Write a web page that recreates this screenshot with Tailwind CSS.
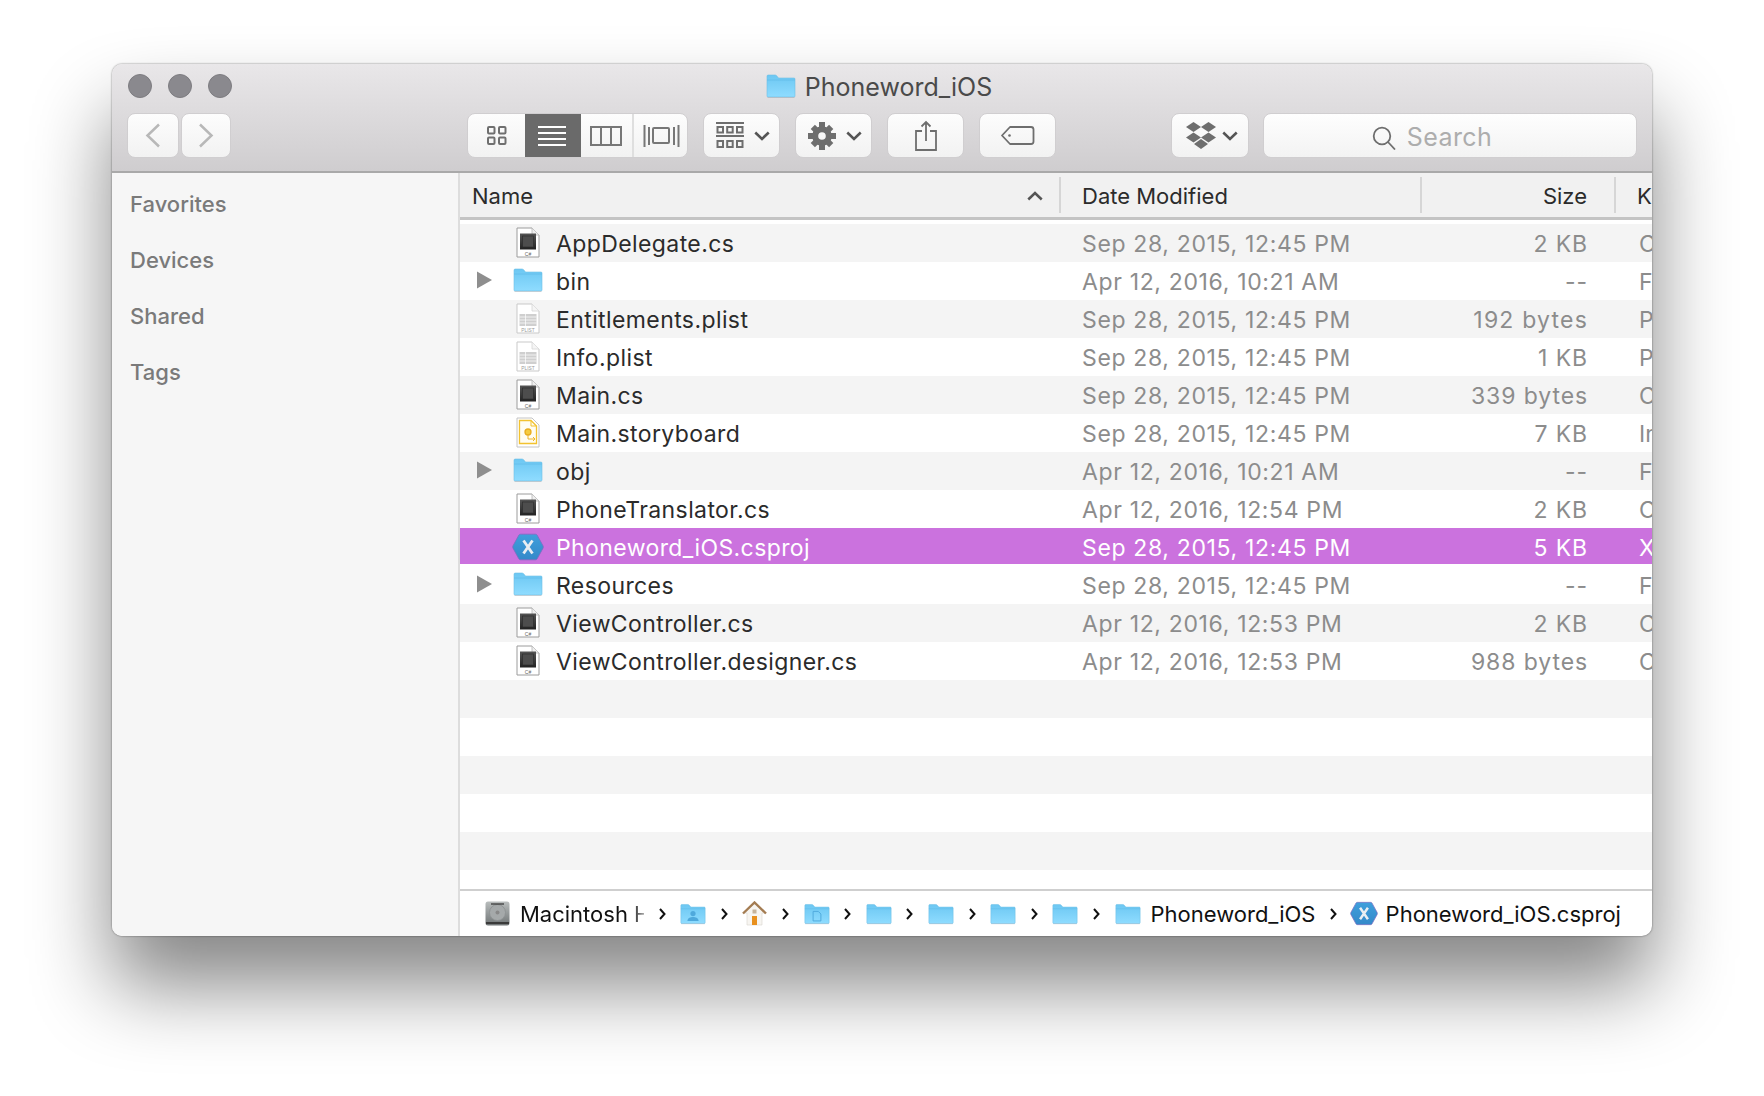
<!DOCTYPE html>
<html lang="en">
<head>
<meta charset="utf-8">
<title>Phoneword_iOS</title>
<script src="https://cdn.jsdelivr.net/npm/@tailwindcss/browser@4"></script>
</head>
<body class="bg-white min-h-screen pl-[112px] pt-[64px] font-['Inter','Liberation_Sans',sans-serif] overflow-hidden">
<svg class="absolute w-0 h-0" aria-hidden="true">
  <defs>
    <linearGradient id="fg" x1="0" y1="0" x2="0" y2="1"><stop offset="0" stop-color="#6cc7f2"/><stop offset="1" stop-color="#8fdcff"/></linearGradient>
    <linearGradient id="sq" x1="0" y1="0" x2="0" y2="1"><stop offset="0" stop-color="#555"/><stop offset="1" stop-color="#222"/></linearGradient>
    <linearGradient id="hx" x1="0" y1="0" x2="0" y2="1"><stop offset="0" stop-color="#3f9fdc"/><stop offset="1" stop-color="#3489c9"/></linearGradient>
    <linearGradient id="dk" x1="0" y1="0" x2="0" y2="1"><stop offset="0" stop-color="#b9bdbd"/><stop offset="1" stop-color="#6f7475"/></linearGradient>
    <symbol id="folder" viewBox="0 0 30 24">
      <path d="M1 22V2.2C1 1.4 1.5 1 2.2 1H9c.7 0 1.2.3 1.7.8L12.5 4H28c.7 0 1 .4 1 1v17c0 .7-.4 1-1 1H2c-.7 0-1-.4-1-1Z" fill="url(#fg)" stroke="#6fbfe6" stroke-width=".6"/>
      <path d="M1 6h28" stroke="#5ab6e4" stroke-width=".8" opacity=".7"/>
      <path d="M1.5 23.5h27" stroke="#9a9a9a" stroke-width=".7" opacity=".5"/>
    </symbol>
    <symbol id="userfolder" viewBox="0 0 30 24">
      <use href="#folder" width="30" height="24"/>
      <circle cx="15" cy="11.5" r="3" fill="#4fa9dc"/>
      <path d="M8.5 20c.5-3.500 3.500-4.500 6.500-4.500s6 1 6.500 4.500Z" fill="#4fa9dc"/>
    </symbol>
    <symbol id="docfolder" viewBox="0 0 30 24">
      <use href="#folder" width="30" height="24"/>
      <path d="M10.500 9h6l3 3v8h-9Z" fill="none" stroke="#4fa9dc" stroke-width="1.100"/>
    </symbol>
    <symbol id="cs" viewBox="0 0 24 31">
      <path d="M1 1h15l7 7v22H1Z" fill="#fff" stroke="#9c9c9c" stroke-width="1"/>
      <path d="M16 1v7h7" fill="#efefef" stroke="#b5b5b5" stroke-width=".8"/>
      <rect x="4" y="6.500" width="16" height="16" fill="url(#sq)"/>
      <rect x="6.500" y="9" width="11" height="11" fill="#4d4d4d" stroke="#2a2a2a" stroke-width=".6"/>
      <text x="12" y="28.500" text-anchor="middle" font-size="5" fill="#666" font-family="Liberation Sans">C#</text>
    </symbol>
    <symbol id="plist" viewBox="0 0 24 31">
      <path d="M1 1h15l7 7v22H1Z" fill="#fff" stroke="#c9c9c9" stroke-width="1"/>
      <path d="M16 1v7h7" fill="#f5f5f5" stroke="#d5d5d5" stroke-width=".8"/>
      <rect x="3.500" y="11" width="17" height="12" fill="#cfcfcf"/>
      <path d="M3.500 14h17M3.500 17h17M3.500 20h17M9.500 11v12" stroke="#fff" stroke-width=".7"/>
      <text x="12" y="29" text-anchor="middle" font-size="4.800" fill="#9a9a9a" font-family="Liberation Sans">PLIST</text>
    </symbol>
    <symbol id="story" viewBox="0 0 24 31">
      <path d="M1 1h15l7 7v22H1Z" fill="#fff" stroke="#c4c4c4" stroke-width="1"/>
      <path d="M3.500 26.500V3.500H15l5.500 5.500v17.500Z" fill="#fffdf2" stroke="#f2c230" stroke-width="1.300"/>
      <path d="M15 3.500V9h5.500" fill="none" stroke="#f2c230" stroke-width="1"/>
      <circle cx="12" cy="15" r="3" fill="#f5cb3f" stroke="#e8ad20" stroke-width="1.300"/>
      <path d="M12 18v4h7M17 20l2 2-2 2" fill="none" stroke="#eeb52a" stroke-width="1"/>
    </symbol>
    <symbol id="xam" viewBox="0 0 32 28">
      <path d="M8.500 1.200h15c.8 0 1.300.3 1.700 1L31 12.800c.4.800.4 1.600 0 2.400l-5.800 10.600c-.4.700-.9 1-1.700 1h-15c-.8 0-1.300-.3-1.700-1L1 15.200c-.4-.8-.4-1.600 0-2.400L6.800 2.200c.4-.7.900-1 1.700-1Z" fill="url(#hx)" stroke="#7d6cc0" stroke-width=".8"/>
      <path d="M11.500 7.500l9 13M20.500 7.500l-9 13" stroke="#e9eef2" stroke-width="2.800"/>
    </symbol>
    <symbol id="chev" viewBox="0 0 7 12">
      <path d="M1 1l4.500 5L1 11" fill="none" stroke="#111" stroke-width="2"/>
    </symbol>
    <symbol id="tri" viewBox="0 0 15 18">
      <path d="M0 .5l15 8.500L0 17.500Z" fill="#8e8e8e"/>
    </symbol>
    <symbol id="drop" viewBox="0 0 15 9">
      <path d="M1.200 1.200 7.500 7.200l6.300-6" fill="none" stroke="#555" stroke-width="2.400"/>
    </symbol>
  </defs>
</svg>

<main class="w-[1540px] h-[872px] rounded-[10px] overflow-hidden flex flex-col bg-white shadow-[0_0_2px_rgba(0,0,0,0.55),0_50px_80px_rgba(0,0,0,0.48)]">
  <header class="h-[109px] shrink-0 bg-gradient-to-b from-[#e9e7e9] to-[#cfcdcf] border-b-2 border-[#a9a9a9]">
    <div class="h-[49px] grid grid-cols-[1fr_auto_1fr] pt-[10px]">
      <div class="flex gap-4 pl-[16px]">
        <span class="w-6 h-6 rounded-full bg-[#8a898e] border border-[#7d7c80]"></span>
        <span class="w-6 h-6 rounded-full bg-[#8a898e] border border-[#7d7c80]"></span>
        <span class="w-6 h-6 rounded-full bg-[#8a898e] border border-[#7d7c80]"></span>
      </div>
      <div class="flex items-center gap-[9px] -ml-[6px] h-6">
        <svg class="w-[30px] h-6"><use href="#folder"/></svg>
        <h1 class="text-[25px] leading-6 pt-[2px] text-[#4a4a4a]">Phoneword_iOS</h1>
      </div>
      <div></div>
    </div>
    <div class="h-[45px] flex pl-[15px]">
      <div class="flex gap-[2px]">
        <button class="w-[52px] rounded-[8px] border border-[#d0ced0] bg-gradient-to-b from-[#fdfdfd] to-[#f2f2f2] flex items-center justify-center">
          <svg class="w-[16px] h-[25px]" viewBox="0 0 16 25"><path d="M14 1.500 2.500 12.500 14 23.500" fill="none" stroke="#b8b8b8" stroke-width="2.500"/></svg>
        </button>
        <button class="w-[50px] rounded-[8px] border border-[#d0ced0] bg-gradient-to-b from-[#fdfdfd] to-[#f2f2f2] flex items-center justify-center">
          <svg class="w-[16px] h-[25px]" viewBox="0 0 16 25"><path d="M2 1.500 13.500 12.500 2 23.500" fill="none" stroke="#b8b8b8" stroke-width="2.500"/></svg>
        </button>
      </div>
      <div class="ml-[236px] w-[221px] flex rounded-[8px] border border-[#d0ced0] bg-gradient-to-b from-[#fdfdfd] to-[#f2f2f2] overflow-hidden">
        <button class="w-[57px] flex items-center justify-center">
          <svg class="w-[22px] h-[21px]" viewBox="0 0 22 21" fill="none" stroke="#6f6f6f" stroke-width="2"><rect x="2" y="2" width="6.500" height="6.500" rx="1"/><rect x="13" y="2" width="6.500" height="6.500" rx="1"/><rect x="2" y="12.500" width="6.500" height="6.500" rx="1"/><rect x="13" y="12.500" width="6.500" height="6.500" rx="1"/></svg>
        </button>
        <button class="w-[56px] -my-px bg-[#6a6a6a] flex items-center justify-center pr-[2px]">
          <svg class="w-[28px] h-[22px]" viewBox="0 0 28 22" stroke="#fff" stroke-width="2"><path d="M0 2h28M0 8h28M0 14h28M0 20h28"/></svg>
        </button>
        <button class="w-[53px] flex items-center justify-center border-r-2 border-[#dfdfdf] pr-[2px]">
          <svg class="w-[32px] h-[20px]" viewBox="0 0 32 20" fill="none" stroke="#777" stroke-width="2"><rect x="1" y="1" width="30" height="18"/><path d="M11 1v18M21 1v18"/></svg>
        </button>
        <button class="flex-1 flex items-center justify-center pl-[2px]">
          <svg class="w-[37px] h-[24px]" viewBox="0 0 37 24" fill="none" stroke="#777" stroke-width="2"><rect x="10" y="4" width="16" height="15" rx="1"/><path d="M1.500 1v22M6 3v18M31 3v18M35.500 1v22"/></svg>
        </button>
      </div>
      <button class="ml-[15px] w-[77px] rounded-[8px] border border-[#d0ced0] bg-gradient-to-b from-[#fdfdfd] to-[#f2f2f2] flex items-center justify-center gap-[10px] pl-[3px]">
        <svg class="w-[28px] h-[27px]" viewBox="0 0 28 27" fill="none" stroke="#6e6e6e" stroke-width="2"><path d="M0 1h28M0 14h28"/><rect x="1.500" y="5" width="5.500" height="5.500"/><rect x="11.200" y="5" width="5.500" height="5.500"/><rect x="21" y="5" width="5.500" height="5.500"/><rect x="1.500" y="19" width="5.500" height="6"/><rect x="11.200" y="19" width="5.500" height="6"/><rect x="21" y="19" width="5.500" height="6"/></svg>
        <svg class="w-[16px] h-[10px]"><use href="#drop"/></svg>
      </button>
      <button class="ml-[15px] w-[77px] rounded-[8px] border border-[#d0ced0] bg-gradient-to-b from-[#fdfdfd] to-[#f2f2f2] flex items-center justify-center gap-[10px] pl-[3px]">
        <svg class="w-[28px] h-[28px]" viewBox="0 0 28 28" fill="#6e6e6e">
          <circle cx="14" cy="14" r="6.800" fill="none" stroke="#6e6e6e" stroke-width="6"/>
          <rect x="11" y="0" width="6" height="6"/><rect x="11" y="22" width="6" height="6"/><rect x="0" y="11" width="6" height="6"/><rect x="22" y="11" width="6" height="6"/>
          <rect x="11" y="1" width="6" height="6" transform="rotate(45 14 14)"/><rect x="11" y="21" width="6" height="6" transform="rotate(45 14 14)"/><rect x="1" y="11" width="6" height="6" transform="rotate(45 14 14)"/><rect x="21" y="11" width="6" height="6" transform="rotate(45 14 14)"/>
        </svg>
        <svg class="w-[16px] h-[10px]"><use href="#drop"/></svg>
      </button>
      <button class="ml-[15px] w-[77px] rounded-[8px] border border-[#d0ced0] bg-gradient-to-b from-[#fdfdfd] to-[#f2f2f2] flex items-center justify-center">
        <svg class="w-[24px] h-[31px]" viewBox="0 0 24 31" fill="none" stroke="#6e6e6e" stroke-width="1.800"><path d="M8 11H2v19h20V11h-6M12 21V2M7.500 6.500 12 2l4.500 4.500"/></svg>
      </button>
      <button class="ml-[15px] w-[77px] rounded-[8px] border border-[#d0ced0] bg-gradient-to-b from-[#fdfdfd] to-[#f2f2f2] flex items-center justify-center">
        <svg class="w-[35px] h-[21px]" viewBox="0 0 35 21" fill="none" stroke="#6e6e6e" stroke-width="1.800"><path d="M10 2h21c1.500 0 2.500 1 2.500 2.500v12c0 1.500-1 2.500-2.500 2.500H10L2 10.500Z" stroke-linejoin="round"/><circle cx="9.500" cy="10.500" r="1.300" fill="#6e6e6e" stroke="none"/></svg>
      </button>
      <button class="ml-[115px] w-[78px] rounded-[8px] border border-[#d0ced0] bg-gradient-to-b from-[#fdfdfd] to-[#f2f2f2] flex items-center justify-center gap-[5px] pl-[2px]">
        <svg class="w-[32px] h-[30px]" viewBox="0 0 32 30" fill="#6e6e6e"><path d="M8.500 1 16 6 8.500 11 1 6Z"/><path d="M23.500 1 31 6l-7.500 5L16 6Z"/><path d="M8.500 11.500 16 16.500l-7.500 5L1 16.500Z"/><path d="M23.500 11.500 31 16.500l-7.500 5-7.500-5Z"/><path d="M16 18 23 23l-7 5-7-5Z"/></svg>
        <svg class="w-[16px] h-[10px]"><use href="#drop"/></svg>
      </button>
      <label class="ml-[14px] w-[374px] rounded-[8px] border border-[#d0ced0] bg-gradient-to-b from-[#fefefe] to-[#f3f3f3] flex items-center justify-center gap-[11px] pr-[36px]">
        <svg class="w-[24px] h-[24px] mt-[4px]" viewBox="0 0 24 24" fill="none" stroke="#6e6e6e" stroke-width="1.800"><circle cx="10" cy="10" r="8.300"/><path d="M16 16l7 7.500"/></svg>
        <span class="text-[25px] mt-[5px] tracking-[0.4px] text-[#adadad]">Search</span>
      </label>
    </div>
  </header>

  <div class="flex-1 flex min-h-0">
    <nav class="w-[348px] shrink-0 bg-[#f6f6f6] border-r-2 border-[#dddddd] pt-[3px] pl-[18px] flex flex-col text-[#7a7a7a] text-[22px] font-medium">
      <div class="h-[56px] flex items-center">Favorites</div>
      <div class="h-[56px] flex items-center">Devices</div>
      <div class="h-[56px] flex items-center">Shared</div>
      <div class="h-[56px] flex items-center">Tags</div>
    </nav>

    <section class="flex-1 min-w-0 flex flex-col text-[23px] whitespace-nowrap">
      <div class="h-[47px] shrink-0 bg-[#f1f1f1] border-b-[3px] border-[#c4c4c4] grid grid-cols-[599px_361px_194px_1fr] text-[22px] text-[#2b2b2b] overflow-hidden">
        <div class="flex items-center justify-between pl-[12px] pr-[16px] pt-[2px] h-[40px] my-auto"><span>Name</span><svg class="w-[16px] h-[10px] -scale-y-100"><use href="#drop"/></svg></div>
        <div class="flex items-center pl-[21px] pt-[2px] border-l-2 border-[#d6d6d6] h-[36px] my-auto">Date Modified</div>
        <div class="flex items-center justify-end pr-[27px] pt-[2px] border-l-2 border-[#d6d6d6] h-[36px] my-auto">Size</div>
        <div class="flex items-center pl-[21px] pt-[2px] border-l-2 border-[#d6d6d6] h-[36px] my-auto">Kind</div>
      </div>
      <div class="h-[4px] shrink-0"></div>
      <div class="flex-1 min-h-0 overflow-hidden flex flex-col">
        <div class="h-[38px] shrink-0 pt-[2px] bg-[#f4f4f4] grid grid-cols-[600px_361px_194px_1fr] items-center">
          <div class="flex items-center pl-[53px]"><svg class="w-[30px] h-[31px] -mt-[4px]"><use href="#cs"/></svg><span class="ml-[13px] tracking-[0.4px] text-[#2b2b2b]">AppDelegate.cs</span></div>
          <div class="pl-[22px] tracking-[0.65px] text-[#8c8c8c]">Sep 28, 2015, 12:45 PM</div><div class="text-right pr-[27px] tracking-[0.9px] text-[#8c8c8c]">2 KB</div><div class="pl-6 text-[#8c8c8c]">C# Source</div>
        </div>
        <div class="h-[38px] shrink-0 pt-[2px] grid grid-cols-[600px_361px_194px_1fr] items-center">
          <div class="flex items-center pl-[17px]"><svg class="w-[15px] h-[18px] mr-[21px] -mt-[4px]"><use href="#tri"/></svg><svg class="w-[30px] h-[24px] -mt-[5px]"><use href="#folder"/></svg><span class="ml-[13px] tracking-[0.4px] text-[#2b2b2b]">bin</span></div>
          <div class="pl-[22px] tracking-[0.65px] text-[#8c8c8c]">Apr 12, 2016, 10:21 AM</div><div class="text-right pr-[27px] tracking-[0.9px] text-[#8c8c8c]">--</div><div class="pl-6 text-[#8c8c8c]">Folder</div>
        </div>
        <div class="h-[38px] shrink-0 pt-[2px] bg-[#f4f4f4] grid grid-cols-[600px_361px_194px_1fr] items-center">
          <div class="flex items-center pl-[53px]"><svg class="w-[30px] h-[31px] -mt-[4px]"><use href="#plist"/></svg><span class="ml-[13px] tracking-[0.4px] text-[#2b2b2b]">Entitlements.plist</span></div>
          <div class="pl-[22px] tracking-[0.65px] text-[#8c8c8c]">Sep 28, 2015, 12:45 PM</div><div class="text-right pr-[27px] tracking-[1.2px] text-[#8c8c8c]">192 bytes</div><div class="pl-6 text-[#8c8c8c]">Property List</div>
        </div>
        <div class="h-[38px] shrink-0 pt-[2px] grid grid-cols-[600px_361px_194px_1fr] items-center">
          <div class="flex items-center pl-[53px]"><svg class="w-[30px] h-[31px] -mt-[4px]"><use href="#plist"/></svg><span class="ml-[13px] tracking-[0.4px] text-[#2b2b2b]">Info.plist</span></div>
          <div class="pl-[22px] tracking-[0.65px] text-[#8c8c8c]">Sep 28, 2015, 12:45 PM</div><div class="text-right pr-[27px] tracking-[0.9px] text-[#8c8c8c]">1 KB</div><div class="pl-6 text-[#8c8c8c]">Property List</div>
        </div>
        <div class="h-[38px] shrink-0 pt-[2px] bg-[#f4f4f4] grid grid-cols-[600px_361px_194px_1fr] items-center">
          <div class="flex items-center pl-[53px]"><svg class="w-[30px] h-[31px] -mt-[4px]"><use href="#cs"/></svg><span class="ml-[13px] tracking-[0.4px] text-[#2b2b2b]">Main.cs</span></div>
          <div class="pl-[22px] tracking-[0.65px] text-[#8c8c8c]">Sep 28, 2015, 12:45 PM</div><div class="text-right pr-[27px] tracking-[0.9px] text-[#8c8c8c]">339 bytes</div><div class="pl-6 text-[#8c8c8c]">C# Source</div>
        </div>
        <div class="h-[38px] shrink-0 pt-[2px] grid grid-cols-[600px_361px_194px_1fr] items-center">
          <div class="flex items-center pl-[53px]"><svg class="w-[30px] h-[31px] -mt-[4px]"><use href="#story"/></svg><span class="ml-[13px] tracking-[0.4px] text-[#2b2b2b]">Main.storyboard</span></div>
          <div class="pl-[22px] tracking-[0.65px] text-[#8c8c8c]">Sep 28, 2015, 12:45 PM</div><div class="text-right pr-[27px] tracking-[0.9px] text-[#8c8c8c]">7 KB</div><div class="pl-6 text-[#8c8c8c]">Interface Builder</div>
        </div>
        <div class="h-[38px] shrink-0 pt-[2px] bg-[#f4f4f4] grid grid-cols-[600px_361px_194px_1fr] items-center">
          <div class="flex items-center pl-[17px]"><svg class="w-[15px] h-[18px] mr-[21px] -mt-[4px]"><use href="#tri"/></svg><svg class="w-[30px] h-[24px] -mt-[5px]"><use href="#folder"/></svg><span class="ml-[13px] tracking-[0.4px] text-[#2b2b2b]">obj</span></div>
          <div class="pl-[22px] tracking-[0.65px] text-[#8c8c8c]">Apr 12, 2016, 10:21 AM</div><div class="text-right pr-[27px] tracking-[0.9px] text-[#8c8c8c]">--</div><div class="pl-6 text-[#8c8c8c]">Folder</div>
        </div>
        <div class="h-[38px] shrink-0 pt-[2px] grid grid-cols-[600px_361px_194px_1fr] items-center">
          <div class="flex items-center pl-[53px]"><svg class="w-[30px] h-[31px] -mt-[4px]"><use href="#cs"/></svg><span class="ml-[13px] tracking-[0.4px] text-[#2b2b2b]">PhoneTranslator.cs</span></div>
          <div class="pl-[22px] tracking-[0.65px] text-[#8c8c8c]">Apr 12, 2016, 12:54 PM</div><div class="text-right pr-[27px] tracking-[0.9px] text-[#8c8c8c]">2 KB</div><div class="pl-6 text-[#8c8c8c]">C# Source</div>
        </div>
        <div class="h-[38px] shrink-0">
          <div class="h-[36px] pt-[3px] bg-[#cb72de] text-white grid grid-cols-[600px_361px_194px_1fr] items-center">
            <div class="flex items-center pl-[52px]"><svg class="w-[32px] h-[28px] -mt-[3px]"><use href="#xam"/></svg><span class="ml-[12px] tracking-[0.4px]">Phoneword_iOS.csproj</span></div>
            <div class="pl-[22px] tracking-[0.65px]">Sep 28, 2015, 12:45 PM</div><div class="text-right pr-[27px] tracking-[0.9px]">5 KB</div><div class="pl-6">Xamarin Project</div>
          </div>
        </div>
        <div class="h-[38px] shrink-0 pt-[2px] grid grid-cols-[600px_361px_194px_1fr] items-center">
          <div class="flex items-center pl-[17px]"><svg class="w-[15px] h-[18px] mr-[21px] -mt-[4px]"><use href="#tri"/></svg><svg class="w-[30px] h-[24px] -mt-[5px]"><use href="#folder"/></svg><span class="ml-[13px] tracking-[0.4px] text-[#2b2b2b]">Resources</span></div>
          <div class="pl-[22px] tracking-[0.65px] text-[#8c8c8c]">Sep 28, 2015, 12:45 PM</div><div class="text-right pr-[27px] tracking-[0.9px] text-[#8c8c8c]">--</div><div class="pl-6 text-[#8c8c8c]">Folder</div>
        </div>
        <div class="h-[38px] shrink-0 pt-[2px] bg-[#f4f4f4] grid grid-cols-[600px_361px_194px_1fr] items-center">
          <div class="flex items-center pl-[53px]"><svg class="w-[30px] h-[31px] -mt-[4px]"><use href="#cs"/></svg><span class="ml-[13px] tracking-[0.4px] text-[#2b2b2b]">ViewController.cs</span></div>
          <div class="pl-[22px] tracking-[0.65px] text-[#8c8c8c]">Apr 12, 2016, 12:53 PM</div><div class="text-right pr-[27px] tracking-[0.9px] text-[#8c8c8c]">2 KB</div><div class="pl-6 text-[#8c8c8c]">C# Source</div>
        </div>
        <div class="h-[38px] shrink-0 pt-[2px] grid grid-cols-[600px_361px_194px_1fr] items-center">
          <div class="flex items-center pl-[53px]"><svg class="w-[30px] h-[31px] -mt-[4px]"><use href="#cs"/></svg><span class="ml-[13px] tracking-[0.4px] text-[#2b2b2b]">ViewController.designer.cs</span></div>
          <div class="pl-[22px] tracking-[0.65px] text-[#8c8c8c]">Apr 12, 2016, 12:53 PM</div><div class="text-right pr-[27px] tracking-[0.9px] text-[#8c8c8c]">988 bytes</div><div class="pl-6 text-[#8c8c8c]">C# Source</div>
        </div>
        <div class="h-[38px] shrink-0 bg-[#f4f4f4]"></div>
        <div class="h-[38px] shrink-0"></div>
        <div class="h-[38px] shrink-0 bg-[#f4f4f4]"></div>
        <div class="h-[38px] shrink-0"></div>
        <div class="h-[38px] shrink-0 bg-[#f4f4f4]"></div>
      </div>
      <footer class="h-[47px] shrink-0 border-t-2 border-[#cfcfcf] flex items-center pl-[25px] gap-[14.600px] text-[22px] text-[#111]">
        <div class="flex items-center gap-[10px]">
          <svg class="w-[25px] h-[25px]" viewBox="0 0 25 25"><rect x=".5" y=".5" width="24" height="24" rx="2.500" fill="url(#dk)"/><circle cx="12.500" cy="11.500" r="8" fill="#a5a9aa" stroke="#8b8f90" stroke-width=".8"/><circle cx="12.500" cy="11.500" r="2" fill="#888"/><path d="M6 3h13" stroke="#333" stroke-width="1.200"/><path d="M1 22h23" stroke="#3a3a3a" stroke-width="2"/></svg>
          <span class="w-[124px] overflow-hidden pt-px [mask-image:linear-gradient(to_right,black_90%,rgba(0,0,0,0.35))]">Macintosh HD</span>
        </div>
        <svg class="w-[7px] h-[12px]"><use href="#chev"/></svg>
        <svg class="w-[26px] h-[24px]" viewBox="0 0 30 24"><use href="#userfolder" width="30" height="24"/></svg>
        <svg class="w-[7px] h-[12px]"><use href="#chev"/></svg>
        <svg class="w-[25px] h-[26px]" viewBox="0 0 25 26"><path d="M12.500 2 2 12h3v12h15V12h3Z" fill="#f7f5f1" stroke="#d9d5ce" stroke-width=".6"/><path d="M1 12.500 12.500 1.500 24 12.500" fill="none" stroke="#a47c52" stroke-width="2.400"/><rect x="10" y="15" width="5" height="9" fill="#e8901e"/><rect x="10.500" y="8.500" width="4" height="4" fill="#c6b39a"/></svg>
        <svg class="w-[7px] h-[12px]"><use href="#chev"/></svg>
        <svg class="w-[26px] h-[24px]" viewBox="0 0 30 24"><use href="#docfolder" width="30" height="24"/></svg>
        <svg class="w-[7px] h-[12px]"><use href="#chev"/></svg>
        <svg class="w-[26px] h-[24px]" viewBox="0 0 30 24"><use href="#folder" width="30" height="24"/></svg>
        <svg class="w-[7px] h-[12px]"><use href="#chev"/></svg>
        <svg class="w-[26px] h-[24px]" viewBox="0 0 30 24"><use href="#folder" width="30" height="24"/></svg>
        <svg class="w-[7px] h-[12px]"><use href="#chev"/></svg>
        <svg class="w-[26px] h-[24px]" viewBox="0 0 30 24"><use href="#folder" width="30" height="24"/></svg>
        <svg class="w-[7px] h-[12px]"><use href="#chev"/></svg>
        <svg class="w-[26px] h-[24px]" viewBox="0 0 30 24"><use href="#folder" width="30" height="24"/></svg>
        <svg class="w-[7px] h-[12px]"><use href="#chev"/></svg>
        <div class="flex items-center gap-[10px]">
          <svg class="w-[26px] h-[24px]" viewBox="0 0 30 24"><use href="#folder" width="30" height="24"/></svg>
          <span class="pt-px">Phoneword_iOS</span>
        </div>
        <svg class="w-[7px] h-[12px]"><use href="#chev"/></svg>
        <div class="flex items-center gap-[8px] -ml-[2px]">
          <svg class="w-[28px] h-[25px]" viewBox="0 0 32 28"><use href="#xam" width="32" height="28"/></svg>
          <span class="pt-px">Phoneword_iOS.csproj</span>
        </div>
      </footer>
    </section>
  </div>
</main>
</body>
</html>
